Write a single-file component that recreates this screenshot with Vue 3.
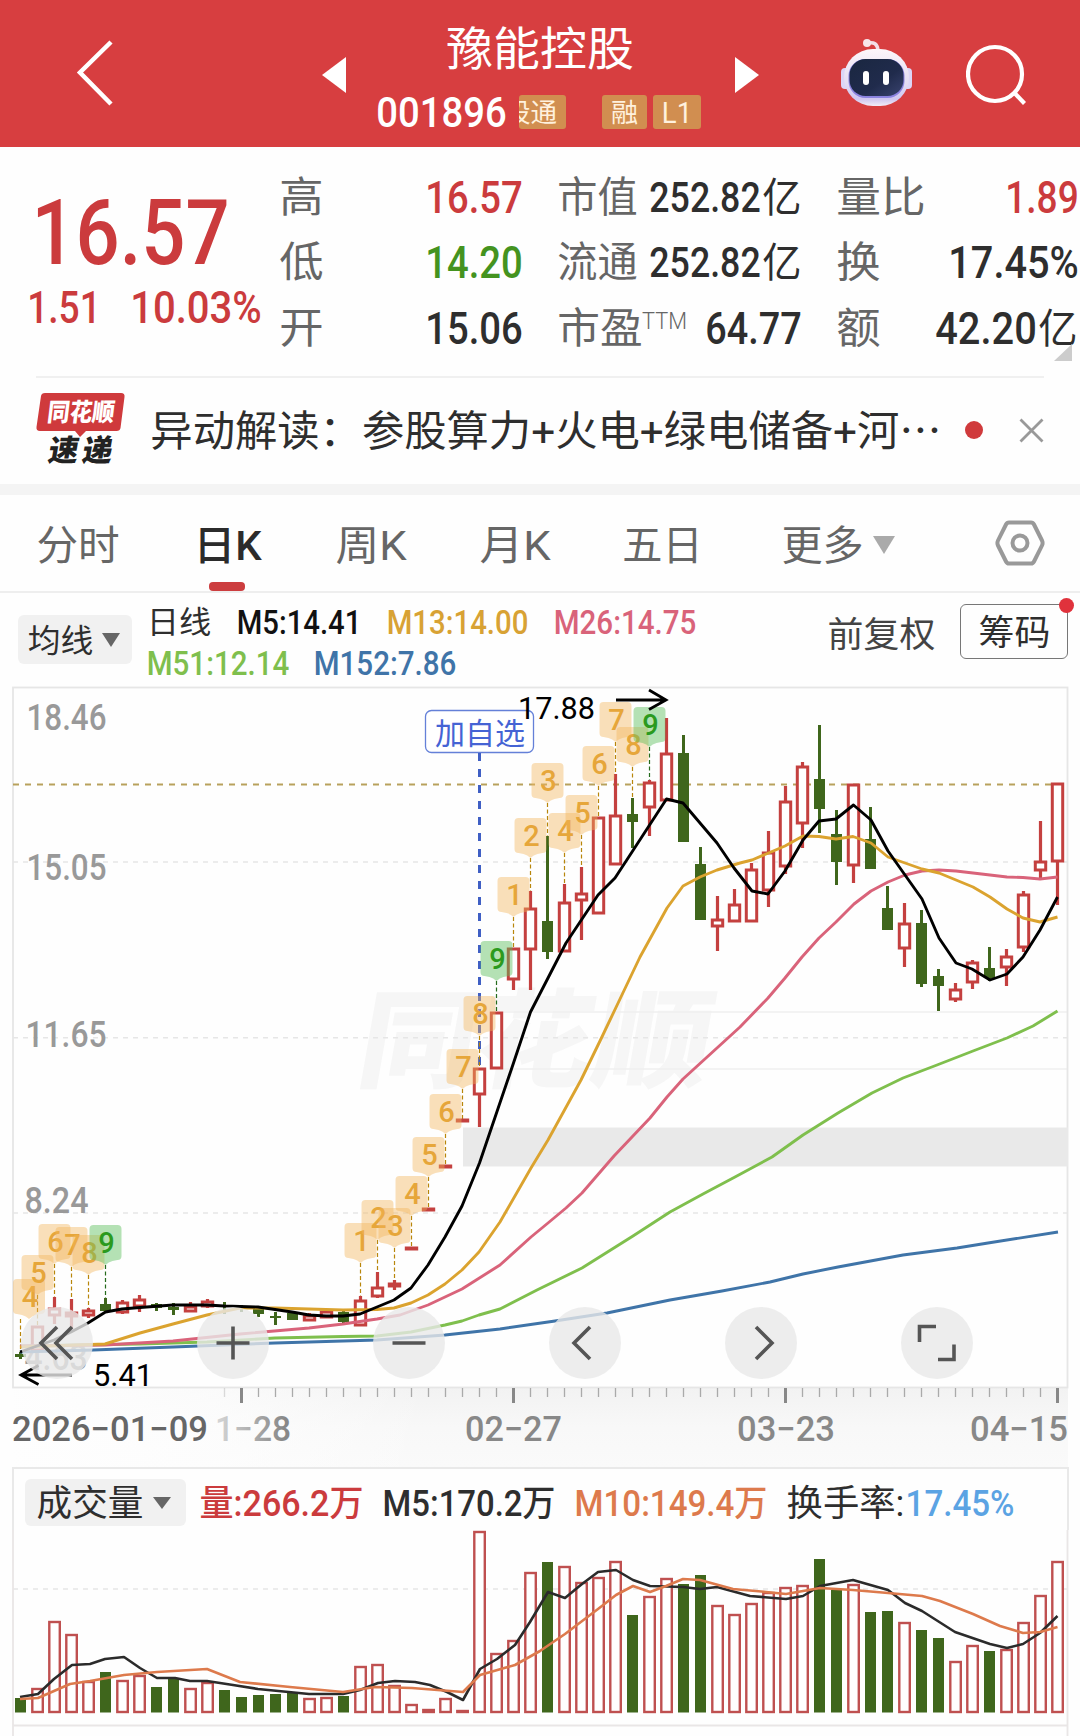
<script setup>
import { h } from 'vue'

// 定宽文字：把一段文字压缩/拉伸到指定宽度，盒子高度等于字高
const Fit = (props) => {
  const size = props.size
  const side = size * 0.04
  const cap = Math.round(size * 0.72)
  return h('svg', { width: props.w, height: cap, style: { overflow: 'visible', flex: 'none', display: 'block' } }, [
    h('text', {
      x: -side,
      y: cap,
      'font-size': size,
      textLength: props.w + side * 2,
      lengthAdjust: 'spacingAndGlyphs',
      fill: 'currentColor'
    }, props.t)
  ])
}
Fit.props = ['t', 'w', 'size']

const quotes = [
  [
    { name: '高', nw: 41, num: '16.57', w: 94, cls: 'red' },
    { name: '低', nw: 41, num: '14.20', w: 94, cls: 'green' },
    { name: '开', nw: 41, num: '15.06', w: 94 }
  ],
  [
    { name: '市值', nw: 77, num: '252.82', w: 108, unit: '亿' },
    { name: '流通', nw: 77, num: '252.82', w: 108, unit: '亿' },
    { name: '市盈', nw: 82, num: '64.77', w: 93, ttm: true }
  ],
  [
    { name: '量比', nw: 86, num: '1.89', w: 70, cls: 'red' },
    { name: '换', nw: 41, num: '17.45%', w: 127 },
    { name: '额', nw: 41, num: '42.20', w: 98, unit: '亿' }
  ]
]

const px = (i) => 20.5 + i * 17

// [颜色, 最高, 实体上沿, 实体下沿, 最低]
const candles = [
  ['g', 1352, 1354, 1357, 1359], ['r', 1327, 1327, 1350, 1352], ['r', 1297, 1309, 1315, 1324], ['r', 1299, 1313, 1316, 1328],
  ['r', 1308, 1311, 1315, 1318], ['g', 1298, 1304, 1311, 1313], ['r', 1300, 1303, 1312, 1314], ['r', 1295, 1300, 1306, 1312],
  ['g', 1303, 1304, 1308, 1311], ['g', 1303, 1307, 1310, 1315], ['r', 1302, 1307, 1311, 1312], ['r', 1299, 1302, 1306, 1308],
  ['g', 1302, 1305, 1307, 1314], ['g', 1305, 1307, 1309, 1312], ['g', 1308, 1309, 1314, 1317], ['g', 1312, 1316, 1318, 1325],
  ['g', 1311, 1313, 1320, 1320], ['r', 1313, 1316, 1320, 1321], ['r', 1309, 1312, 1317, 1318], ['g', 1310, 1312, 1322, 1323],
  ['r', 1296, 1301, 1325, 1326], ['r', 1272, 1288, 1296, 1298], ['r', 1280, 1284, 1286, 1290], ['r', 1248, 1248, 1249, 1249],
  ['r', 1209, 1209, 1210, 1210], ['r', 1166, 1166, 1167, 1167], ['r', 1120, 1120, 1121, 1121], ['r', 1069, 1069, 1094, 1127],
  ['r', 1013, 1013, 1068, 1068], ['r', 949, 949, 979, 990], ['r', 891, 909, 949, 990], ['g', 836, 921, 952, 959],
  ['r', 884, 903, 951, 951], ['r', 867, 894, 900, 940], ['r', 818, 818, 913, 913], ['r', 774, 816, 864, 864],
  ['g', 798, 814, 822, 848], ['r', 780, 783, 807, 836], ['r', 718, 754, 800, 800], ['g', 735, 753, 842, 842],
  ['g', 847, 864, 920, 920], ['r', 896, 920, 926, 951], ['r', 889, 905, 921, 921], ['r', 863, 870, 921, 921],
  ['r', 831, 853, 890, 907], ['r', 786, 802, 866, 874], ['r', 762, 767, 823, 848], ['g', 725, 779, 809, 833],
  ['g', 810, 834, 862, 885], ['r', 785, 785, 865, 883], ['g', 807, 839, 869, 869], ['g', 886, 908, 930, 930],
  ['r', 903, 924, 948, 967], ['g', 910, 923, 984, 987], ['g', 969, 976, 986, 1011], ['r', 983, 990, 999, 1002],
  ['r', 960, 963, 982, 989], ['g', 947, 968, 978, 981], ['r', 949, 957, 967, 986], ['r', 891, 895, 947, 952],
  ['r', 821, 862, 870, 879], ['r', 784, 784, 861, 905]
]

// 成交量柱顶
const volumes = [
  1698, 1688, 1621, 1634, 1681, 1672, 1680, 1675, 1687, 1679, 1688, 1682, 1690, 1697, 1695, 1694,
  1693, 1698, 1697, 1696, 1666, 1664, 1685, 1704, 1709, 1698, 1710, 1531, 1653, 1640, 1572, 1562,
  1566, 1582, 1577, 1561, 1615, 1596, 1578, 1584, 1575, 1605, 1614, 1603, 1592, 1587, 1585, 1559,
  1590, 1584, 1612, 1611, 1622, 1630, 1638, 1661, 1645, 1651, 1649, 1622, 1595, 1561
]

// 九转序列 [K线序号, 数字, 标签顶部]
const turns = [
  [0, 4, 1279], [1, 5, 1255], [2, 6, 1224], [3, 7, 1227], [4, 8, 1235], [5, 9, 1225],
  [20, 1, 1223], [21, 2, 1200], [22, 3, 1208], [23, 4, 1176], [24, 5, 1137], [25, 6, 1094], [26, 7, 1049], [27, 8, 996], [28, 9, 941],
  [29, 1, 877], [30, 2, 818], [31, 3, 763], [32, 4, 813], [33, 5, 795], [34, 6, 746], [35, 7, 702], [36, 8, 727], [37, 9, 707]
]
const tagX = (i) => (i === 0 ? 29 : px(i))
const tagPath = (i, y) => {
  const x = tagX(i) - 16
  return `M${x + 4} ${y}h24q4 0 4 4v27q0 4-4 4l-5 1q-4 1-7 4q-3-3-7-4l-5-1q-4 0-4-4v-27q0-4 4-4z`
}

const lines = [
  { color: '#3f74a8', pts: '20,1352 93,1350 173,1347 275,1343 377,1340 445,1335 500,1329 555,1321 607,1313 670,1300 722,1291 770,1282 803,1274 838,1267 903,1255 957,1248 988,1243 1058,1232' },
  { color: '#7fbf4d', pts: '20,1346 140,1344 207,1342 275,1338 343,1336.5 377,1336 411,1332 445,1325 462,1321 479,1315 500,1309 537,1290 582,1268 633,1236 670,1212 703,1194 735,1177 772,1157 803,1135 838,1113 872,1093 903,1078 937,1065 973,1051 1007,1038 1033,1026 1057.5,1011' },
  { color: '#d9637a', pts: '20,1346 105,1345 173,1341 240,1334 309,1328 343,1324 377,1319 400,1315 428,1305 462,1289 500,1265 531,1237 548,1223 566,1208 582,1193 614,1156 650,1118 667,1097 683,1079 740,1027 768,998 785,978 802,957 819,938 836,922 854,904 871,891 888,882 905,875 922,871 939,870 956,871 990,875 1007,877 1023,877.5 1040,879 1057.5,877' },
  { color: '#dba32f', pts: '20,1347 105,1344 140,1333 173,1324 207,1315 240,1308 275,1308 309,1309 343,1310 377,1309.5 394,1308 411,1303 428,1295 445,1284 462,1270 479,1252 500,1222 531,1168 548,1140 581,1080 600,1041 620,999 640,957 667,908 683,886 700,877 717,870 740,863 752,860 785,846 803,836 819,836.5 836,839 853,836.5 871,843 888,857 922,869 939,873 956,880 973,887 990,897 1007,909 1023,918 1040,922 1057.5,917' },
  { color: '#000', pts: '20,1352 54,1340 71,1332 88,1323 105.5,1312 122,1309 140,1307.5 173,1305 207,1305 224,1306 258,1307 292,1312 309,1315 326,1316 343,1316 360,1314 377,1307 394,1300 411,1288 428,1265 445,1237 462,1206 479.5,1163 496.5,1113 513.5,1063 530.5,1012 548,978 566,943 598,895 615,878 632,852 666.5,799 683,803 717,843 734,868 752,891 768,894 785,871 803,840 819,821 836,819 853.5,805 871,820 888,851 905,875 922,899 939,938 956,963 972,969 990,980 1007,974 1023,957 1040,930 1057.5,897' }
]
const volLines = [
  { color: '#2b2b2b', pts: '20,1697 38,1694 54,1679 72,1665 90,1664 105,1659 124,1657 140,1668 157,1678 175,1678 190,1681 207,1681 233,1685 258,1689 309,1694 343,1694 360,1690 378,1683 395,1681 415,1682 430,1685 447,1692 463,1700 480,1669 497,1659 515,1645 530,1622 548,1592 565,1598 582,1584 598,1572 616,1570 633,1580 650,1586 683,1587 700,1589 717,1587 750,1596 786,1599 803,1596 820,1586 853,1580 888,1590 905,1603 922,1611 955,1632 990,1644 1007,1648 1023,1644 1040,1633 1057.5,1616' },
  { color: '#dd7a4c', pts: '20,1699 38,1698 54,1691 70,1684 90,1681 124,1675 157,1672 207,1669 240,1682 290,1687 343,1692 375,1687 412,1688 463,1692 480,1675 515,1665 540,1651 565,1634 598,1609 616,1595 633,1586 650,1592 666,1586 683,1579 700,1580 733,1589 766,1592 786,1594 820,1588 853,1590 888,1593 922,1596 940,1601 973,1614 1000,1626 1023,1633 1040,1632 1057.5,1627' }
]

const scale = [
  ['18.46', 28, 730, 77], ['15.05', 28, 880, 77], ['11.65', 27, 1047, 78], ['8.24', 26, 1213, 61], ['4.63', 26, 1370, 60]
]
const ticks = Array.from({ length: 50 }, (_, k) => k + 12)

const tools = [
  'M36 20L20 36l16 16M51 20L35 36l16 16',
  'M36 19.5v33M19.5 36h33',
  'M19.5 36h33',
  'M41 20L25 36l16 16',
  'M31 20L47 36l-16 16',
  'M18.5 35V19.5H35M53 37.5V52.5H37'
]
</script>

<template>
  <div class="page">
    <header class="top">
      <svg class="back" width="40" height="68" viewBox="0 0 40 68"><path d="M36 4L5 34.5L36 66" /></svg>
      <svg class="prev" width="24" height="36"><path d="M24 0v36L0 18z" fill="#fff" /></svg>
      <div class="stock">
        <Fit class="title" t="豫能控股" :w="184" :size="46" />
        <div class="code">
          <Fit class="num" t="001896" :w="127" :size="42" />
          <span class="tag cut"><Fit t="股通" :w="51" :size="26" /></span>
          <span class="tag"><Fit t="融" :w="25" :size="26" /></span>
          <span class="tag l1"><Fit t="L1" :w="28" :size="29" /></span>
        </div>
      </div>
      <svg class="next" width="24" height="36"><path d="M0 0v36L24 18z" fill="#fff" /></svg>
      <svg class="robot" width="74" height="70" viewBox="0 0 74 70">
        <defs>
          <linearGradient id="head" x1="0" y1="0" x2="0" y2="1">
            <stop offset="0" stop-color="#fdf6fa" /><stop offset=".6" stop-color="#e3dcf3" /><stop offset=".88" stop-color="#cfc6f0" /><stop offset="1" stop-color="#f3ecf7" />
          </linearGradient>
          <linearGradient id="face" x1="0" y1="0" x2="1" y2="1">
            <stop offset="0" stop-color="#1a2740" /><stop offset=".6" stop-color="#202b4c" /><stop offset="1" stop-color="#39436f" />
          </linearGradient>
        </defs>
        <path d="M28 6q9-2 10 7" fill="none" stroke="#f3dde6" stroke-width="3.5" />
        <circle cx="27" cy="6" r="4" fill="#f8e5ea" />
        <rect x="1" y="31" width="9" height="21" rx="4" fill="#dcd5f6" />
        <rect x="63" y="31" width="9" height="21" rx="4" fill="#dcd5f6" />
        <rect x="4" y="12" width="65" height="57" rx="29" fill="url(#head)" />
        <rect x="8.5" y="22" width="56" height="39" rx="17" fill="#8b83e0" />
        <rect x="9.5" y="22" width="54" height="37" rx="16" fill="url(#face)" />
        <rect x="23" y="34" width="6" height="14" rx="3" fill="#fff" />
        <rect x="43" y="34" width="6" height="14" rx="3" fill="#fff" />
      </svg>
      <svg class="search" width="62" height="62" viewBox="0 0 62 62"><circle cx="29" cy="30" r="27" /><path d="M48.5 49l10 10.5" /></svg>
    </header>

    <section class="quote">
      <div class="price red">
        <Fit t="16.57" :w="191" :size="90" />
        <div class="change"><Fit t="1.51" :w="70" :size="45" /><Fit t="10.03%" :w="128" :size="45" /></div>
      </div>
      <div v-for="(col, c) in quotes" :key="c" class="col">
        <div v-for="q in col" :key="q.name" class="cell">
          <Fit class="name" :t="q.name" :w="q.nw" :size="42" />
          <Fit v-if="q.ttm" class="ttm" t="TTM" :w="43" :size="24" />
          <Fit class="val" :class="q.cls" :t="q.num" :w="q.w" :size="q.w === 108 ? 42 : 44" />
          <Fit v-if="q.unit" class="unit" :t="q.unit" :w="36" :size="41" />
        </div>
      </div>
      <i class="corner"></i>
    </section>

    <section class="news">
      <div class="logo">
        <svg width="90" height="74" viewBox="0 0 90 74">
          <path d="M9 0h76q4 0 3.5 4l-4 31q-.5 3-4 3H50l-6 6-5-6H4q-4 0-3.5-4l4.5-31q.5-3 4-3z" fill="#cf3a3c" />
          <text x="13" y="28" transform="skewX(-7) translate(1 0)" textLength="67" lengthAdjust="spacingAndGlyphs" font-size="25" font-weight="900" fill="#fff">同花顺</text>
          <text x="18" y="68" transform="skewX(-10) translate(5 0)" textLength="64" font-size="30" font-weight="900" fill="#222">速递</text>
        </svg>
      </div>
      <Fit class="headline" t="异动解读：参股算力+火电+绿电储备+河⋯" :w="788" :size="41.5" />
      <i class="dot"></i>
      <svg class="close" width="25" height="25"><path d="M1.5 1.5l22 22M23.5 1.5l-22 22" stroke="#999" stroke-width="2.8" /></svg>
    </section>

    <nav class="tabs">
      <Fit t="分时" :w="80" :size="41" />
      <div class="tab active"><Fit t="日K" :w="65" :size="41" /></div>
      <Fit t="周K" :w="68" :size="41" />
      <Fit t="月K" :w="68" :size="41" />
      <Fit t="五日" :w="77" :size="41" />
      <div class="more"><Fit t="更多" :w="79" :size="41" /><svg width="22" height="18"><path d="M0 0h22l-11 18z" fill="#aaa" /></svg></div>
      <svg class="gear" width="50" height="48" viewBox="0 0 50 48"><path d="M14 3.5h22q2 0 3 2l8 16q1.200 2.500 0 5l-8 16q-1 2-3 2H14q-2 0-3-2l-8-16q-1.200-2.500 0-5l8-16q1-2 3-2z" /><circle cx="25" cy="24" r="7.5" /></svg>
    </nav>

    <section class="ma">
      <div class="pill"><Fit t="均线" :w="63" :size="32" /><svg width="18" height="14"><path d="M0 0h18l-9 14z" fill="#666" /></svg></div>
      <div class="legend">
        <div class="row">
          <Fit class="cn" t="日线" :w="62" :size="31" />
          <Fit class="m5" t="M5:14.41" :w="122" :size="33" />
          <Fit class="m13" t="M13:14.00" :w="139" :size="33" />
          <Fit class="m26" t="M26:14.75" :w="140" :size="33" />
        </div>
        <div class="row">
          <Fit class="m51" t="M51:12.14" :w="140" :size="33" />
          <Fit class="m152" t="M152:7.86" :w="140" :size="33" />
        </div>
      </div>
      <Fit class="adj" t="前复权" :w="105" :size="35" />
      <div class="chips"><Fit t="筹码" :w="69" :size="35" /><i></i></div>
    </section>

    <section class="kline">
      <svg width="1080" height="787" viewBox="0 680 1080 787">
        <defs>
          <linearGradient id="axis" x1="0" y1="0" x2="0" y2="1"><stop offset="0" stop-color="#f2f2f2" /><stop offset=".5" stop-color="#f8f8f8" /><stop offset="1" stop-color="#fafafa" /></linearGradient>
          <linearGradient id="veil" x1="0" y1="0" x2="1" y2="0"><stop offset="0" stop-color="#fefefe" /><stop offset=".5" stop-color="#fefefe" stop-opacity=".7" /><stop offset="1" stop-color="#fefefe" stop-opacity="0" /></linearGradient>
          <linearGradient id="fade" gradientUnits="userSpaceOnUse" x1="210" y1="0" x2="285" y2="0"><stop offset="0" stop-color="#ddd" /><stop offset=".6" stop-color="#aaa" /><stop offset="1" stop-color="#888" /></linearGradient>
        </defs>
        <rect x="13" y="1387" width="1055" height="80" fill="url(#axis)" />
        <rect x="0" y="1388" width="430" height="79" fill="url(#veil)" />
        <text x="354" y="1079" transform="translate(190 0) skewX(-10)" font-size="107" font-weight="900" fill="#f6f6f6" textLength="352" lengthAdjust="spacingAndGlyphs">同花顺</text>

        <g fill="none" stroke="#e6e6e6" stroke-width="2">
          <path d="M13 862H1067M13 1037.7H1067M13 1213H1067" stroke-dasharray="5 5" stroke-width="1.5" />
          <path d="M503 1012H1067M503 1069H1067" stroke="#efefef" stroke-width="1.5" />
          <rect x="13" y="687.5" width="1054.5" height="700" stroke-width="1.8" />
        </g>
        <rect x="463" y="1127.5" width="605" height="39" fill="#e9e9e9" />
        <path d="M13 784.5H1057" stroke="#b8a15c" stroke-width="1.8" stroke-dasharray="6 6" />

        <g class="scale">
          <text v-for="s in scale" :key="s[0]" :x="s[1] - 1.5" :y="s[2]" :textLength="s[3] + 3" lengthAdjust="spacingAndGlyphs">{{ s[0] }}</text>
        </g>

        <rect x="425.5" y="710.5" width="108" height="42" rx="6" fill="#fff" stroke="#6480d8" stroke-width="1.3" />
        <text x="435" y="744" font-size="30" fill="#4563d4" textLength="90" lengthAdjust="spacingAndGlyphs">加自选</text>
        <path d="M479.5 753V1067" stroke="#3f5fc4" stroke-width="3" stroke-dasharray="8 8" />

        <g v-for="t in turns" :key="'l' + t[0]">
          <path :d="`M${px(t[0])} ${t[2] + 40}V${candles[t[0]][1]}`" :stroke="t[1] === 9 ? '#256b1c' : '#b8860b'" stroke-width="1.2" stroke-dasharray="4 2.5" />
        </g>

        <g v-for="(k, i) in candles" :key="'k' + i">
          <template v-if="k[0] === 'r'">
            <path :d="`M${px(i)} ${k[1]}V${k[2]}M${px(i)} ${k[3]}V${k[4]}`" stroke="#c4403f" stroke-width="3.2" />
            <rect :x="px(i) - 5.2" :y="k[2]" width="10.4" :height="k[3] - k[2]" fill="#fff" stroke="#c4403f" stroke-width="3" />
          </template>
          <template v-else>
            <path :d="`M${px(i)} ${k[1]}V${k[4]}`" stroke="#3f661c" stroke-width="3" />
            <rect :x="px(i) - 5.5" :y="k[2]" width="11" :height="k[3] - k[2]" fill="#3f661c" />
          </template>
        </g>

        <polyline v-for="l in lines" :key="l.color" :points="l.pts" fill="none" :stroke="l.color" stroke-width="2.9" stroke-linejoin="round" />

        <g v-for="t in turns" :key="'t' + t[0]">
          <path :d="tagPath(t[0], t[2])" :fill="t[1] === 9 ? 'rgba(92,190,92,.45)' : 'rgba(243,182,90,.42)'" />
          <text class="digit" :x="tagX(t[0]) + 1" :y="t[2] + 28" :fill="t[1] === 9 ? '#2b9a1e' : '#e6a63a'">{{ t[1] }}</text>
        </g>

        <g fill="none" stroke="#000" stroke-width="2.8">
          <path d="M616 700H666M649 690l17 10l-17 9.5" />
          <path d="M72 1375H21M38.5 1365.5L21 1375l17.5 9.5" />
        </g>
        <g class="extreme">
          <text x="518" y="718.5" textLength="77" lengthAdjust="spacingAndGlyphs">17.88</text>
          <text x="93" y="1385.5" textLength="60" lengthAdjust="spacingAndGlyphs">5.41</text>
        </g>

        <g stroke="#aaa" stroke-width="1.3">
          <path v-for="i in ticks" :key="i" :d="`M${px(i)} 1388V${(i - 13) % 16 === 0 ? 1403 : 1397}`" :stroke-width="(i - 13) % 16 === 0 ? 3 : 1.3" :stroke="(i - 13) % 16 === 0 ? '#888' : '#aaa'" :opacity="i === 12 ? 0.4 : 1" />
        </g>
        <g class="dates">
          <text x="12" y="1441" textLength="196" lengthAdjust="spacingAndGlyphs" fill="#666">2026−01−09</text>
          <text x="215" y="1441" textLength="76" lengthAdjust="spacingAndGlyphs" fill="url(#fade)">1−28</text>
          <text x="465" y="1441" textLength="97" lengthAdjust="spacingAndGlyphs">02−27</text>
          <text x="737" y="1441" textLength="98" lengthAdjust="spacingAndGlyphs">03−23</text>
          <text x="970" y="1441" textLength="98" lengthAdjust="spacingAndGlyphs">04−15</text>
        </g>
      </svg>
      <div class="tools">
        <svg v-for="(d, i) in tools" :key="i" width="72" height="72" viewBox="0 0 72 72">
          <circle cx="36" cy="36" r="36" fill="#e9e9e9" fill-opacity=".8" />
          <path :d="d" fill="none" stroke="#555" stroke-width="3.6" />
        </svg>
      </div>
    </section>

    <section class="volume">
      <div class="vhead">
        <div class="pill vol"><Fit t="成交量" :w="104" :size="36" /><svg width="18" height="12"><path d="M0 0h18l-9 12z" fill="#666" /></svg></div>
        <Fit class="mid red" t="量:266.2万" :w="161" :size="36" />
        <Fit class="mid" t="M5:170.2万" :w="170" :size="36" />
        <Fit class="mid orange" t="M10:149.4万" :w="190" :size="36" />
        <Fit t="换手率:" :w="115" :size="36" />
        <Fit class="mid blue" t="17.45%" :w="106" :size="36" />
      </div>
      <svg width="1080" height="206" viewBox="0 1530 1080 206">
        <path d="M13 1589H1067" stroke="#e6e6e6" stroke-width="1.5" stroke-dasharray="5 5" />
        <g v-for="(v, i) in volumes" :key="i">
          <rect v-if="candles[i][0] === 'r'" :x="px(i) - 5.2" :y="v + 1" width="10.5" :height="1711 - v" fill="#fff" stroke="#bf5050" stroke-width="2.4" />
          <rect v-else :x="px(i) - 5.5" :y="v" width="11" :height="1712.5 - v" fill="#3f661c" />
        </g>
        <polyline v-for="l in volLines" :key="l.color" :points="l.pts" fill="none" :stroke="l.color" stroke-width="2.6" stroke-linejoin="round" />
        <path d="M13 1725.5H1067.5M13 1530V1736M1067.5 1530V1736" fill="none" stroke="#e9e6e6" stroke-width="1.8" />
      </svg>
    </section>
  </div>
</template>

<style>
body {
  margin: 0;
  background: #fff;
}
</style>

<style scoped>
.page {
  width: 1080px;
  height: 1736px;
  overflow: hidden;
  background: #fefefe;
  color: #2e2e2e;
  font-family: Roboto, "Noto Sans CJK SC", sans-serif;
}

.red {
  color: #cb3b3d;
}

.green {
  color: #44931f;
}

/* 顶部 */
.top {
  height: 147px;
  box-sizing: border-box;
  display: flex;
  align-items: flex-start;
  background: #d73e40;
  color: #fff;
}

.back {
  margin: 38px 0 0 75px;
  fill: none;
  stroke: #fff;
  stroke-width: 4.5;
}

.prev {
  margin: 57px 0 0 207px;
}

.stock {
  width: 389px;
}

.title {
  margin: 32px 0 0 102px;
}

.code {
  display: flex;
  align-items: center;
  height: 34px;
  margin: 30px 0 0 32px;
}

.num {
  font-weight: 500;
}

.tag {
  display: flex;
  align-items: center;
  justify-content: center;
  width: 45px;
  height: 34px;
  margin-left: 36px;
  border-radius: 3px;
  background: #d18e50;
  color: #fff1dd;
}

.tag.cut {
  width: 47px;
  margin-left: 14px;
  justify-content: flex-end;
  padding-right: 10px;
  box-sizing: border-box;
  overflow: hidden;
}

.tag.l1 {
  width: 48px;
  margin-left: 6px;
}

.next {
  margin-top: 57px;
}

.robot {
  margin: 37px 0 0 81px;
}

.search {
  margin: 44px 0 0 52px;
  fill: none;
  stroke: #fff;
  stroke-width: 4.2;
}

/* 报价 */
.quote {
  position: relative;
  display: flex;
  height: 229px;
}

.price {
  width: 252px;
  padding: 52px 0 0 29px;
  font-weight: 500;
}

.price > svg {
  margin-left: 6px;
}

.change {
  display: flex;
  gap: 33px;
  margin-top: 27px;
}

.col {
  width: 240px;
  padding-top: 17px;
  margin-right: 38px;
}

.col:nth-child(3) {
  width: 241px;
}

.col:nth-child(4) {
  width: 238.5px;
  margin-right: 0;
}

.cell {
  display: flex;
  align-items: center;
  height: 65.5px;
}

.name {
  color: #666;
  font-weight: 400;
}

.ttm {
  margin: -14px 0 0 2px;
  color: #666;
  font-weight: 300;
}

.val {
  margin-left: auto;
  font-weight: 500;
}

.unit {
  margin-left: 5px;
}

.col:nth-child(4) .unit {
  margin-right: 1px;
}

.corner {
  position: absolute;
  right: 8px;
  bottom: 15px;
  border-left: 18px solid transparent;
  border-bottom: 17px solid #ccc;
}

/* 资讯 */
.news {
  height: 108px;
  box-sizing: border-box;
  display: flex;
  align-items: center;
  margin: 0 36px;
  padding-bottom: 2px;
  border-top: 2px solid #f0f0f0;
}

.logo {
  width: 117px;
  height: 74px;
}

.headline {
  margin-top: 2px;
}

.dot {
  width: 18px;
  height: 18px;
  margin-left: 25px;
  border-radius: 50%;
  background: #d03a3c;
}

.close {
  margin-left: 36px;
}

/* 周期 */
.tabs {
  height: 109px;
  box-sizing: border-box;
  display: flex;
  align-items: center;
  padding-left: 38px;
  border-top: 11px solid #f4f4f4;
  border-bottom: 2px solid #eee;
  color: #666;
}

.tabs > svg:not(.gear),
.tab > svg,
.more {
  position: relative;
  top: 1.5px;
}

.tabs > svg:nth-child(3) {
  margin-left: 77px;
}

.tabs > svg:nth-child(4) {
  margin-left: 76px;
}

.tabs > svg:nth-child(5) {
  margin-left: 75px;
}

.tab {
  align-self: stretch;
  display: flex;
  align-items: center;
  position: relative;
  margin-left: 77px;
}

.active {
  color: #2b2b2b;
  font-weight: 500;
}

.active::after {
  content: "";
  position: absolute;
  left: 14px;
  bottom: 0;
  width: 36px;
  height: 9px;
  border-radius: 4px;
  background: #cc3d3f;
}

.more {
  display: flex;
  align-items: center;
  gap: 11px;
  margin-left: 82px;
}

.gear {
  margin-left: 100px;
  fill: none;
  stroke: #999;
  stroke-width: 4;
}

/* 均线 */
.ma {
  height: 87px;
  display: flex;
  align-items: flex-start;
  padding-left: 18px;
}

.pill {
  width: 114px;
  height: 49px;
  margin-top: 22px;
  box-sizing: border-box;
  display: flex;
  align-items: center;
  justify-content: space-between;
  padding: 1px 12px 0 11px;
  border-radius: 6px;
  background: #f1f1f1;
}

.legend {
  width: 697px;
  padding: 16px 0 0 16px;
  box-sizing: border-box;
}

.row {
  display: flex;
  align-items: center;
  height: 26px;
  gap: 28px;
}

.row + .row {
  margin-top: 15px;
  gap: 27px;
}

.m5,
.m13,
.m26,
.m51,
.m152 {
  font-weight: 500;
}

.m5 { color: #111; }
.m13 { color: #d8a234; }
.m26 { color: #d9637a; }
.m51 { color: #7fbf4d; }
.m152 { color: #3f74a8; }

.adj {
  margin-top: 29px;
  color: #444;
}

.chips {
  position: relative;
  width: 108px;
  height: 55px;
  margin: 11px 0 0 26px;
  padding-top: 2px;
  box-sizing: border-box;
  display: flex;
  align-items: center;
  justify-content: center;
  border: 1.5px solid #777;
  border-radius: 6px;
}

.chips i {
  position: absolute;
  top: -7px;
  right: -7px;
  width: 15px;
  height: 15px;
  border-radius: 50%;
  background: #e0323c;
}

/* K线 */
.kline {
  position: relative;
  height: 787px;
}

.kline > svg {
  display: block;
}

.scale text {
  font-size: 37px;
  font-weight: 500;
  fill: #999;
}

.digit {
  font-size: 29px;
  font-weight: 500;
  text-anchor: middle;
}

.extreme text {
  font-size: 31px;
  fill: #000;
}

.dates text {
  font-size: 35px;
  font-weight: 500;
}

.dates {
  fill: #888;
}

.tools {
  position: absolute;
  left: 20.5px;
  top: 627px;
  display: flex;
  gap: 104.2px;
}

/* 成交量 */
.volume {
  height: 269px;
}

.volume > svg {
  display: block;
}

.vhead {
  display: flex;
  align-items: center;
  width: 1056.5px;
  height: 63px;
  margin-left: 12px;
  box-sizing: border-box;
  padding: 6px 0 0 11px;
  border: 2px solid #e9e9e9;
  border-bottom: 0;
}

.vhead > svg {
  margin-left: 22px;
}

.vhead > svg:nth-child(2) {
  margin-left: 15px;
}

.vhead > svg:last-child {
  margin-left: 4px;
}

.mid {
  font-weight: 500;
}

.pill.vol {
  width: 161px;
  height: 47px;
  margin-top: 0;
  padding: 0 15px 0 13px;
}

.orange {
  color: #dd7a4c;
}

.blue {
  color: #5ba3e3;
}
</style>
